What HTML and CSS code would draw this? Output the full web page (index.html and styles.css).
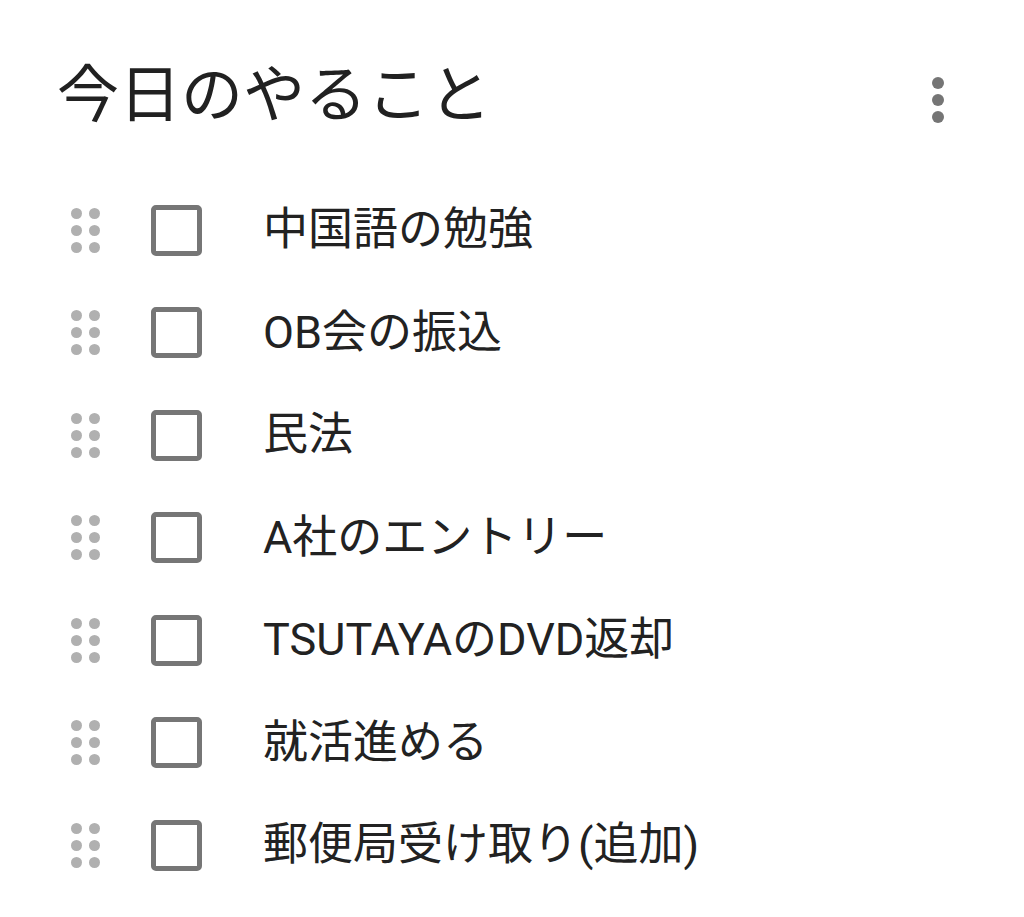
FILE: index.html
```html
<!DOCTYPE html>
<html>
  <head>
    <title>今日のやること</title>
    <link rel="stylesheet" href="styles.css">
  </head>
  <body>
    <div class="task_list">
      <div class="list-header">
        <h1>今日のやること</h1>
        <div class="menu-button">
          <span></span>
          <span></span>
          <span></span>
        </div>
      </div>

      <ul class="items">
        <li class="item">
          <div class="drag-handle"><i></i><i></i><i></i><i></i><i></i><i></i></div>
          <div class="checkbox"></div>
          <span class="label">中国語の勉強</span>
        </li>
        <li class="item">
          <div class="drag-handle"><i></i><i></i><i></i><i></i><i></i><i></i></div>
          <div class="checkbox"></div>
          <span class="label">OB会の振込</span>
        </li>
        <li class="item">
          <div class="drag-handle"><i></i><i></i><i></i><i></i><i></i><i></i></div>
          <div class="checkbox"></div>
          <span class="label">民法</span>
        </li>
        <li class="item">
          <div class="drag-handle"><i></i><i></i><i></i><i></i><i></i><i></i></div>
          <div class="checkbox"></div>
          <span class="label">A社のエントリー</span>
        </li>
        <li class="item">
          <div class="drag-handle"><i></i><i></i><i></i><i></i><i></i><i></i></div>
          <div class="checkbox"></div>
          <span class="label">TSUTAYAのDVD返却</span>
        </li>
        <li class="item">
          <div class="drag-handle"><i></i><i></i><i></i><i></i><i></i><i></i></div>
          <div class="checkbox"></div>
          <span class="label">就活進める</span>
        </li>
        <li class="item">
          <div class="drag-handle"><i></i><i></i><i></i><i></i><i></i><i></i></div>
          <div class="checkbox"></div>
          <span class="label">郵便局受け取り(追加)</span>
        </li>
      </ul>
    </div>
  </body>
</html>
```

FILE: styles.css
```css
* {
  box-sizing: border-box;
  margin: 0;
  padding: 0;
}

body {
  background: white;
  font-family: Roboto, 'Noto Sans CJK JP', sans-serif;
  color: #212121;
}

.task_list {
  width: 1024px;
  padding-top: 54px;
}

.list-header {
  display: flex;
  justify-content: space-between;
  align-items: center;
  padding: 0 80px 0 57px;
}

h1 {
  font-family: 'Noto Sans CJK JP', sans-serif;
  font-weight: 400;
  font-size: 62px;
  line-height: 72px;
  color: #212121;
}

.menu-button {
  display: flex;
  flex-direction: column;
  gap: 5px;
  margin-top: 20px;
}

.menu-button span {
  width: 12px;
  height: 12px;
  border-radius: 50%;
  background: #757575;
}

.items {
  list-style: none;
  margin-top: 53px;
}

.item {
  display: flex;
  align-items: center;
  height: 102.5px;
  padding-left: 71px;
}

.drag-handle {
  display: grid;
  grid-template-columns: 11px 11px;
  grid-auto-rows: 11px;
  column-gap: 7px;
  row-gap: 6px;
  width: 29px;
}

.drag-handle i {
  display: block;
  border-radius: 50%;
  background: #b0b0b0;
}

.checkbox {
  width: 51px;
  height: 51px;
  border: 5px solid #767676;
  border-radius: 5px;
  margin-left: 51px;
}

.label {
  margin-left: 61px;
  font-size: 45px;
  line-height: 60px;
  color: #222;
}
```
